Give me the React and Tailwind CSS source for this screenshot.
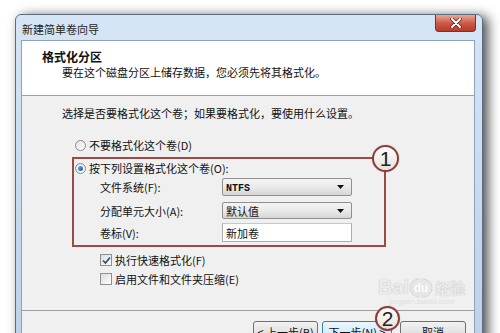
const CJK = "font-['Noto_Sans_CJK_SC','Noto_Sans_CJK_JP',sans-serif]";

function Radio({ checked }) {
  return (
    <span className="w-[11px] h-[11px] rounded-full border border-[#8a8a8a] bg-gradient-to-br from-[#e2e2e2] to-[#ffffff] flex items-center justify-center shrink-0">
      {checked && (
        <span className="w-[5px] h-[5px] rounded-full bg-gradient-to-br from-[#6fb2ee] to-[#1b4f94]" />
      )}
    </span>
  );
}

function Check({ checked }) {
  return (
    <span className="w-[12px] h-[12px] border border-[#8e8f8f] bg-gradient-to-br from-[#dcdcdc] to-[#ffffff] flex items-center justify-center shrink-0">
      {checked && (
        <svg width="9" height="9" viewBox="0 0 9 9">
          <path d="M1 4.5 L3.5 7 L8 1.5" fill="none" stroke="#2c4f80" strokeWidth="1.7" />
        </svg>
      )}
    </span>
  );
}

function Combo({ children, h }) {
  return (
    <div className={`w-[130px] ${h} rounded-[2px] border border-[#8f8f8f] bg-gradient-to-b from-[#f4f4f4] via-[#eaeaea] to-[#d6d6d6] flex items-center justify-between pl-[3px] pr-[7px]`}>
      <span>{children}</span>
      <svg width="7" height="4" viewBox="0 0 7 4">
        <path d="M0 0 L7 0 L3.5 4 Z" fill="#111" />
      </svg>
    </div>
  );
}

function Btn({ w, children, focus }) {
  return (
    <div className={`${w} h-[22px] rounded-[3px] border ${focus ? "border-[#3c7fb1] bg-gradient-to-b from-[#eaf6fd] to-[#bee6fd]" : "border-[#707070] bg-gradient-to-b from-[#f2f2f2] to-[#d4d4d4]"} flex items-center justify-center text-[11px]`}>
      {children}
    </div>
  );
}

function Marker({ n, className }) {
  return (
    <div className={`absolute rounded-full border-2 border-[#8e3c36] bg-gradient-to-b from-[#ffffff] to-[#e6e1dc] flex items-center justify-center font-['Liberation_Sans',sans-serif] text-[21px] leading-none text-[#222] shadow-[0_0_1px_rgba(0,0,0,0.4)] ${className}`}>
      {n}
    </div>
  );
}

export default function App() {
  return (
    <div className={`relative w-[500px] h-[333px] overflow-hidden bg-white pl-[15px] pt-[14px] ${CJK} text-[11px] leading-[14px] text-[#111]`}>
      <div className="w-[468px] h-[340px] rounded-t-[6px] border border-[#5b6d84] bg-gradient-to-b from-[#d6e5f5] via-[#c8dbef] to-[#bcd1e8] shadow-[5px_2px_12px_rgba(0,0,0,0.7)] flex flex-col">
        {/* title bar */}
        <div className="h-[25px] flex items-start justify-between pl-[6px] pr-[6px] shrink-0">
          <span className="mt-[7px] text-[11px] text-[#1e1e1e]">新建简单卷向导</span>
          <div className="w-[41px] h-[17px] rounded-b-[4px] border border-t-0 border-[#7a302a] bg-gradient-to-b from-[#e7a898] via-[#cf5a48] to-[#b8392a] flex items-center justify-center">
            <svg width="12" height="10" viewBox="0 0 12 10">
              <path d="M2 1 L10 9 M10 1 L2 9" stroke="#5a2220" strokeWidth="3.6" strokeLinecap="round" />
              <path d="M2 1 L10 9 M10 1 L2 9" stroke="#ffffff" strokeWidth="2" strokeLinecap="round" />
            </svg>
          </div>
        </div>
        {/* client area */}
        <div className="ml-[5px] w-[454px] flex-1 border border-[#8ea3bb] bg-[#f0f0f0] flex flex-col">
          {/* header */}
          <div className="h-[55px] bg-white border-b border-[#a0a0a0] pt-[9px] shrink-0">
            <div className="pl-[20px] font-bold text-[12px] leading-[14px]">格式化分区</div>
            <div className="pl-[40px] mt-[1px]">要在这个磁盘分区上储存数据，您必须先将其格式化。</div>
          </div>
          {/* body */}
          <div className="h-[215px] border-b border-[#a0a0a0] pl-[40px] pt-[10px] flex flex-col shrink-0">
            <div>选择是否要格式化这个卷；如果要格式化，要使用什么设置。</div>
            <div className="mt-[18px] ml-[13px] flex items-center gap-[3px] h-[14px]">
              <Radio />
              <span>不要格式化这个卷(D)</span>
            </div>
            <div className="mt-[5px] ml-[10px] w-[314px] border-2 border-[#9b4a44] pt-[2px] pb-[3px] pl-[1px] flex flex-col">
              <div className="flex items-center gap-[3px] h-[14px]">
                <Radio checked />
                <span>按下列设置格式化这个卷(O):</span>
              </div>
              <div className="mt-[3px] flex items-center h-[18px]">
                <span className="ml-[25px] w-[122px]">文件系统(F):</span>
                <Combo h="h-[18px]"><span className="font-['Liberation_Mono',monospace] font-bold text-[10px]">NTFS</span></Combo>
              </div>
              <div className="mt-[6px] flex items-center h-[17px]">
                <span className="ml-[25px] w-[122px]">分配单元大小(A):</span>
                <Combo h="h-[17px]">默认值</Combo>
              </div>
              <div className="mt-[4px] flex items-center h-[19px]">
                <span className="ml-[25px] w-[122px]">卷标(V):</span>
                <div className="w-[130px] h-[19px] border border-[#abadb3] border-t-[#c8c8c8] bg-white flex items-center pl-[3px]">新加卷</div>
              </div>
            </div>
            <div className="mt-[6px] ml-[38px] flex items-center gap-[3px] h-[14px]">
              <Check checked />
              <span>执行快速格式化(F)</span>
            </div>
            <div className="mt-[5px] ml-[38px] flex items-center gap-[3px] h-[14px]">
              <Check />
              <span>启用文件和文件夹压缩(E)</span>
            </div>
          </div>
          {/* footer */}
          <div className="pt-[10px] pr-[8px] flex justify-end">
            <Btn w="w-[65px]">&lt; 上一步(B)</Btn>
            <div className="ml-[4px]">
              <Btn w="w-[70px]" focus>下一步(N) &gt;</Btn>
            </div>
            <div className="ml-[8px]">
              <Btn w="w-[66px]">取消</Btn>
            </div>
          </div>
        </div>
      </div>

      {/* Baidu watermark */}
      <div className="absolute left-[378px] top-[277px] flex flex-col items-center text-[#ececec] opacity-80">
        <div className="flex items-end">
          <span className="font-['Liberation_Sans',sans-serif] font-bold text-[20px] leading-[20px] [text-shadow:0_0_1px_#9a9a9a]">Bai</span>
          <span className="relative w-[22px] h-[18px] rounded-full bg-[#e4e4e4] mx-[1px] flex items-center justify-center font-['Liberation_Sans',sans-serif] font-bold text-[12px] text-white shadow-[0_0_1px_#888]">du</span>
          <span className="text-[15px] leading-[18px] font-bold ml-[2px] [text-shadow:0_0_1px_#9a9a9a]">经验</span>
        </div>
        <span className="font-['Liberation_Sans',sans-serif] text-[8px] leading-[10px] text-[#dcdcdc]">jingyan.baidu.com</span>
      </div>

      <Marker n="1" className="left-[372px] top-[145px] w-[27px] h-[27px]" />
      <Marker n="2" className="left-[375px] top-[306px] w-[25px] h-[25px]" />
    </div>
  );
}
